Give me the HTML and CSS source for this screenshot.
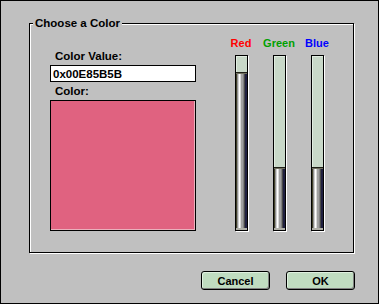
FILE: index.html
```html
<!DOCTYPE html>
<html lang="en">
<head>
    <meta charset="UTF-8">
    <title>Choose a Color</title>
    <link rel="stylesheet" href="styles.css">
</head>
<body>
    <div class="window">
        <div class="group">
            <span class="group-title">Choose a Color</span>
            <div class="color-col">
                <div class="label">Color Value:</div>
                <input class="value-input" type="text" value="0x00E85B5B">
                <div class="label label-color">Color:</div>
                <div class="swatch"></div>
            </div>
            <div class="sliders">
                <div class="slider">
                    <div class="slider-label red">Red</div>
                    <div class="track"><div class="fill" style="height: 91%"></div></div>
                </div>
                <div class="slider">
                    <div class="slider-label green">Green</div>
                    <div class="track"><div class="fill" style="height: 36%"></div></div>
                </div>
                <div class="slider">
                    <div class="slider-label blue">Blue</div>
                    <div class="track"><div class="fill" style="height: 36%"></div></div>
                </div>
            </div>
        </div>
        <div class="buttons">
            <button class="button">Cancel</button>
            <button class="button">OK</button>
        </div>
    </div>
</body>
</html>
```

FILE: styles.css
```css
body {
    margin: 0;
    font-family: "Liberation Sans", Arial, sans-serif;
    font-size: 11px;
    font-weight: bold;
    color: #000;
}
.window {
    width: 379px;
    height: 304px;
    box-sizing: border-box;
    border: 1px solid #000;
    background: #c0c0c0;
    padding: 22px 0 0 28px;
}
.group {
    position: relative;
    display: flex;
    align-items: flex-start;
    width: 325px;
    height: 230px;
    box-sizing: border-box;
    padding-left: 20px;
    border: 1px solid #000;
    box-shadow: 1px 1px 0 #fff, inset 1px 1px 0 #fff;
}
.group-title {
    position: absolute;
    top: -7px;
    left: 3px;
    padding: 0 2px;
    font-size: 11.5px;
    line-height: 13px;
    background: #c0c0c0;
}
.color-col {
    width: 146px;
    padding-top: 26px;
}
.label {
    padding-left: 5px;
    font-size: 11.5px;
    line-height: 13px;
}
.label-color {
    margin-top: 3px;
}
.value-input {
    display: block;
    box-sizing: border-box;
    width: 146px;
    height: 17px;
    margin: 2px 0 0;
    padding: 0 0 0 2px;
    border: 1px solid #000;
    background: #fff;
    font: inherit;
    font-size: 11.5px;
    outline: none;
}
.swatch {
    height: 131px;
    margin-top: 2px;
    box-sizing: border-box;
    border: 1px solid #000;
    background: #e06280;
    box-shadow: inset -1px -1px 0 #eab0bc;
}
.sliders {
    display: flex;
    margin-left: 26px;
    padding-top: 13px;
}
.slider {
    display: flex;
    flex-direction: column;
    align-items: center;
    width: 38px;
}
.slider-label {
    line-height: 13px;
    margin-bottom: 5px;
}
.red {
    color: #ff0000;
}
.green {
    color: #00a000;
}
.blue {
    color: #0000ff;
}
.track {
    display: flex;
    flex-direction: column;
    justify-content: flex-end;
    width: 13px;
    height: 176px;
    box-sizing: border-box;
    border: 1px solid #000;
    background: #c8d8c8;
    box-shadow: 1px 1px 0 #fff, inset 1px 1px 0 #e0ece0;
}
.fill {
    box-sizing: border-box;
    border-top: 1px solid #202018;
    border-bottom: 2px solid #b0b0a8;
    background: linear-gradient(to right,
        #404028 0, #404028 1px,
        #909090 1px, #909090 2px,
        #d0d0d0 2px, #d0d0d0 3px,
        #ffffff 3px, #ffffff 4px,
        #d8d8d8 4px, #d8d8d8 5px,
        #a0a0a0 5px, #a0a0a0 7px,
        #808080 7px, #808080 8px,
        #484848 8px, #484848 9px,
        #202040 9px, #202040 11px);
    box-shadow: inset 0 1px 0 #707060;
}
.buttons {
    display: flex;
    justify-content: flex-end;
    gap: 16px;
    margin-top: 18px;
    padding-right: 23px;
}
.button {
    width: 69px;
    height: 19px;
    padding: 0;
    border: 1px solid #000;
    border-radius: 3px;
    background: #c0dcc0;
    box-shadow: inset -1px -1px 0 #808080, inset 1px 1px 0 #e0f0e0;
    font: inherit;
    color: #000;
    cursor: pointer;
}
```
